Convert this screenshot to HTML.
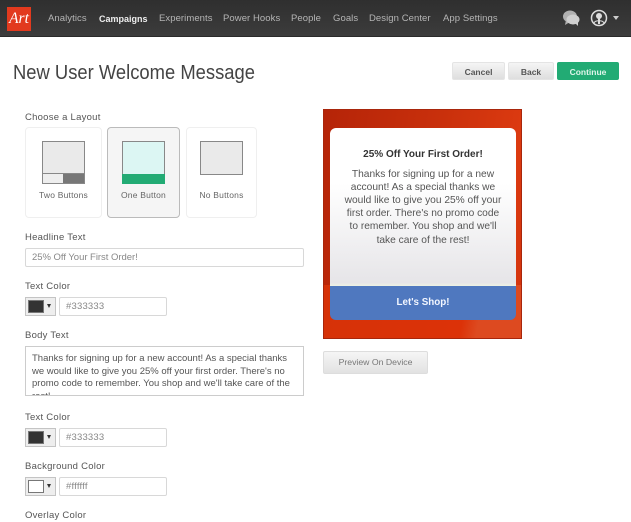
<!DOCTYPE html>
<html><head><meta charset="utf-8"><style>
html,body{margin:0;padding:0;background:#fff}
#p{position:relative;width:631px;height:522px;overflow:hidden;font-family:"Liberation Sans",sans-serif;background:#fff}
#p div,#p span.a{position:absolute;box-sizing:border-box}
.n{top:13px;font-size:9.5px;line-height:12px;color:#b5b5b5;font-weight:400;white-space:nowrap;letter-spacing:.07px}
.l{left:25px;font-size:9.5px;line-height:12px;color:#555;white-space:nowrap;letter-spacing:.25px}
.i{background:#fff;border:1px solid #d8d8d8;border-radius:2px;font-size:9.5px;color:#888;line-height:17px;padding-left:6px;white-space:nowrap;letter-spacing:.2px}
.sw{left:25px;width:31px;height:19px;background:#eee;border:1px solid #c4c4c4}
.sw i{position:absolute;left:2px;top:2px;width:16px;height:13px;border:1px solid #777;box-sizing:border-box}
.sw b{position:absolute;left:21px;top:6px;width:0;height:0;border-left:2.5px solid transparent;border-right:2.5px solid transparent;border-top:4px solid #333}
.b{top:62px;height:18px;border-radius:2px;font-size:8.5px;font-weight:700;text-align:center;line-height:18px;color:#555;background:linear-gradient(#f5f5f5,#dedede);border:1px solid #e4e4e4}
.c{top:127px;height:91px;border:1px solid #efefef;border-radius:4px;background:#fff}
.t{font-size:8.5px;line-height:11px;color:#666;text-align:center;white-space:nowrap;top:190px;letter-spacing:.2px}
.th{top:141px;width:43px;border:1px solid #888;background:#eaeaea}
.ln{left:330px;width:186px;text-align:center;font-size:10.2px;line-height:13px;color:#555;white-space:nowrap}
.bt{left:32px;font-size:9.5px;line-height:12px;color:#555;white-space:nowrap}
</style></head><body><div id="p">
<div style="left:0;top:0;width:631px;height:37px;background:linear-gradient(#2f2f2f,#3c3c3c);border-bottom:1px solid #2a2a2a"></div>
<div style="left:7px;top:7px;width:24px;height:24px;background:#e23a1e;color:#fff;font-family:'Liberation Serif',serif;font-style:italic;font-weight:400;font-size:15.5px;line-height:23px;text-align:center">Art</div>
<div class="n" style="left:48px">Analytics</div>
<div class="n" style="left:99px;color:#eee;font-weight:700;font-size:9px;letter-spacing:0">Campaigns</div>
<div class="n" style="left:159px">Experiments</div>
<div class="n" style="left:223px">Power Hooks</div>
<div class="n" style="left:291px">People</div>
<div class="n" style="left:333px">Goals</div>
<div class="n" style="left:369px">Design Center</div>
<div class="n" style="left:443px">App Settings</div>
<svg style="position:absolute;left:562px;top:9px" width="19" height="18" viewBox="0 0 19 18"><ellipse cx="8" cy="7.5" rx="7" ry="6" fill="#b0b0b0"/><path d="M4 11l-1 5 5-3z" fill="#b0b0b0"/><ellipse cx="11" cy="10.5" rx="6.5" ry="5" fill="#cfcfcf"/><path d="M13 14l3 3v-5z" fill="#cfcfcf"/></svg>
<svg style="position:absolute;left:590px;top:9px" width="18" height="18" viewBox="0 0 18 18"><circle cx="9" cy="9" r="7.5" fill="#3a3a3a" stroke="#ddd" stroke-width="1.5"/><circle cx="9" cy="7" r="3" fill="#ddd"/><path d="M8 9h2v6H8z" fill="#ddd"/><path d="M4 14c1-3 9-3 10 0" fill="none" stroke="#ddd"/></svg>
<div style="left:613px;top:16px;width:0;height:0;border-left:3px solid transparent;border-right:3px solid transparent;border-top:4px solid #ccc"></div>

<div style="left:13px;top:60px;font-size:20px;line-height:26px;color:#444;white-space:nowrap;transform:scaleX(.92);transform-origin:0 0">New User Welcome Message</div>
<div class="b" style="left:452px;width:53px">Cancel</div>
<div class="b" style="left:508px;width:46px">Back</div>
<div class="b" style="left:557px;width:62px;background:#22ab74;border-color:#22ab74;color:#dff5ea">Continue</div>

<div class="l" style="top:112px">Choose a Layout</div>
<div class="c" style="left:25px;width:77px"></div>
<div class="c" style="left:107px;width:73px;background:#f5f5f5;border-color:#bbb"></div>
<div class="c" style="left:186px;width:71px"></div>
<div class="th" style="left:42px;height:43px"></div>
<div style="left:42px;top:173px;width:43px;height:11px;border:1px solid #888;background:#eee"></div>
<div style="left:63px;top:174px;width:21px;height:9px;background:#777"></div>
<div class="th" style="left:122px;height:43px;background:#dcf6f3"></div>
<div style="left:122px;top:174px;width:43px;height:10px;background:#22ab74"></div>
<div class="th" style="left:200px;height:34px"></div>
<div class="t" style="left:25px;width:77px">Two Buttons</div>
<div class="t" style="left:107px;width:73px">One Button</div>
<div class="t" style="left:186px;width:71px">No Buttons</div>

<div class="l" style="top:232px">Headline Text</div>
<div class="i" style="left:25px;top:248px;width:279px;height:19px;letter-spacing:-.03px">25% Off Your First Order!</div>
<div class="l" style="top:281px">Text Color</div>
<div class="sw" style="top:297px"><i style="background:#333"></i><b></b></div>
<div class="i" style="left:59px;top:297px;width:108px;height:19px">#333333</div>
<div class="l" style="top:330px">Body Text</div>
<div style="left:25px;top:346px;width:279px;height:50px;border:1px solid #ccc;overflow:hidden;background:#fff">
<div class="bt" style="left:6px;top:6px">Thanks for signing up for a new account! As a special thanks</div>
<div class="bt" style="left:6px;top:19px">we would like to give you 25% off your first order. There's no</div>
<div class="bt" style="left:6px;top:31px">promo code to remember. You shop and we'll take care of the</div>
<div class="bt" style="left:6px;top:44px">rest!</div>
</div>
<div class="l" style="top:412px">Text Color</div>
<div class="sw" style="top:428px"><i style="background:#333"></i><b></b></div>
<div class="i" style="left:59px;top:428px;width:108px;height:19px">#333333</div>
<div class="l" style="top:461px">Background Color</div>
<div class="sw" style="top:477px"><i style="background:#fff"></i><b></b></div>
<div class="i" style="left:59px;top:477px;width:108px;height:19px">#ffffff</div>
<div class="l" style="top:510px">Overlay Color</div>

<div style="left:323px;top:109px;width:199px;height:230px;background:linear-gradient(100deg,#b52408 0%,#c9300c 50%,#dc3a10 85%,#d2330c 100%);border:1px solid #a8260c"></div>
<div style="left:324px;top:285px;width:197px;height:53px;background:linear-gradient(100deg,#d63208,#dc3208 70%,#dd4a20 78%,#dd4a20 100%)"></div>
<div style="left:330px;top:128px;width:186px;height:158px;border-radius:6px 6px 0 0;background:linear-gradient(#fff 0,#fff 35%,#e6e5e8 98%,#eef2e4 100%)"></div>
<div style="left:330px;top:286px;width:186px;height:34px;border-radius:0 0 6px 6px;background:#4f78bf;color:#f2f6ff;font-weight:700;font-size:9.8px;line-height:34px;text-align:center">Let's Shop!</div>
<div class="ln" style="top:148px;font-weight:700;color:#333;font-size:10px">25% Off Your First Order!</div>
<div class="ln" style="top:168px">Thanks for signing up for a new</div>
<div class="ln" style="top:181px">account! As a special thanks we</div>
<div class="ln" style="top:194px">would like to give you 25% off your</div>
<div class="ln" style="top:207px">first order. There's no promo code</div>
<div class="ln" style="top:220px">to remember. You shop and we'll</div>
<div class="ln" style="top:234px">take care of the rest!</div>
<div style="left:323px;top:351px;width:105px;height:23px;border:1px solid #ddd;border-radius:2px;background:linear-gradient(#f5f5f5,#e2e2e2);font-size:8.7px;line-height:21px;text-align:center;color:#777">Preview On Device</div>
</div></body></html>
